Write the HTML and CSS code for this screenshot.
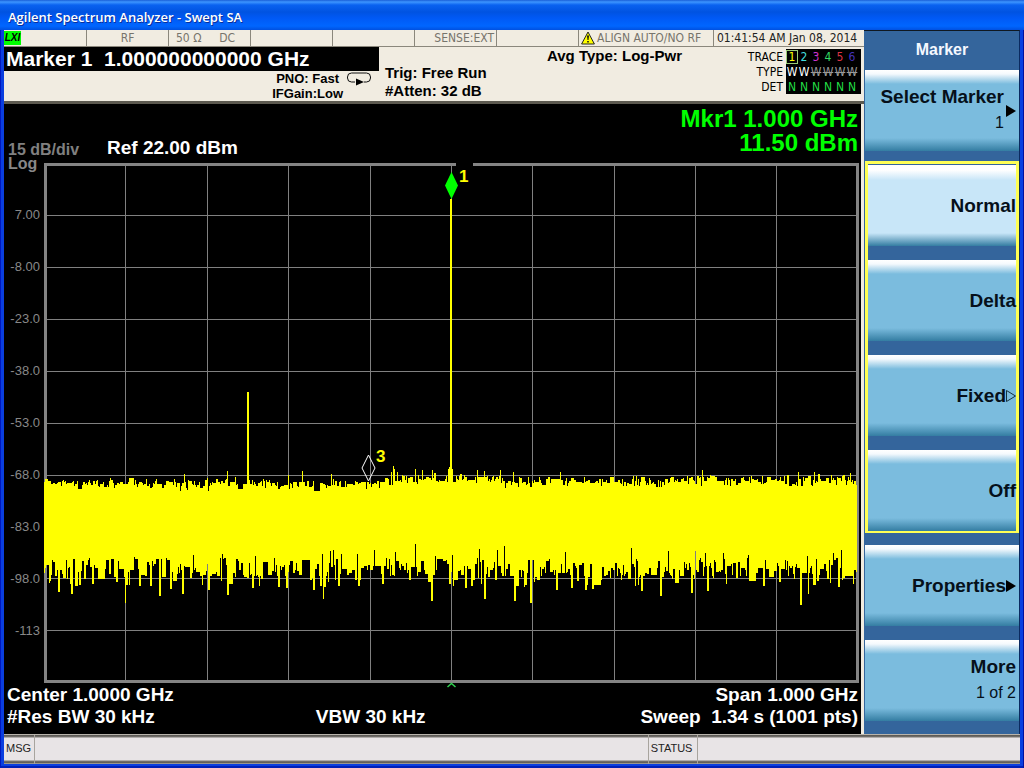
FILE: index.html
```
<!DOCTYPE html>
<html lang="en">
<head>
<meta charset="utf-8">
<title>Agilent Spectrum Analyzer - Swept SA</title>
<link rel="stylesheet" href="styles.css">
</head>
<body>
<div class="window">
  <header class="titlebar"><h1>Agilent Spectrum Analyzer - Swept SA</h1></header>
  <div class="workspace">
    <main class="screen">
      <div class="status-row">
        <div class="cell"><span class="lxi">LXI</span></div>
        <div class="cell center">RF</div>
        <div class="cell input"><span>50 Ω</span><span>DC</span></div>
        <div class="cell"></div>
        <div class="cell"></div>
        <div class="cell end">SENSE:EXT</div>
        <div class="cell"></div>
        <div class="cell align">
          <svg class="warn" viewBox="0 0 14 14" aria-hidden="true"><path d="M7 1 13.4 13H.6Z" fill="#ff0" stroke="#222" stroke-linejoin="round"/><path d="M6 4.500h2L7.500 9h-1ZM6.200 10h1.600v1.600H6.200Z" fill="#111"/></svg>
          <span>ALIGN AUTO/NO RF</span>
        </div>
        <div class="cell clock">01:41:54 AM Jan 08, 2014</div>
      </div>
      <div class="info">
        <div class="info-marker">
          <div class="marker-value">Marker 1&nbsp; 1.000000000000 GHz</div>
          <div class="pno">
            <div class="pno-text">PNO: Fast<br>IFGain:Low</div>
            <svg class="loop" viewBox="0 0 24 14" aria-hidden="true"><path d="M8 10H4.500Q.5 10 .5 6V5Q.5 1 4.500 1h15q4 0 4 4v1q0 4-4 4H17" fill="none" stroke="#111"/><path d="M9 6.500 17 10l-8 3.500Z" fill="#000"/></svg>
          </div>
        </div>
        <div class="trig">Trig: Free Run<br>#Atten: 32 dB</div>
        <div class="avg">Avg Type: Log-Pwr</div>
        <table class="traces">
          <tr><th scope="row">TRACE</th><td class="t1"><span>1</span></td><td class="t2">2</td><td class="t3">3</td><td class="t4">4</td><td class="t5">5</td><td class="t6">6</td></tr>
          <tr class="type"><th scope="row">TYPE</th><td>W</td><td>W</td><td class="off">W</td><td class="off">W</td><td class="off">W</td><td class="off">W</td></tr>
          <tr class="det"><th scope="row">DET</th><td>N</td><td>N</td><td>N</td><td>N</td><td>N</td><td>N</td></tr>
        </table>
      </div>
      <section class="display">
        <div class="readout">
          <div class="scale">15 dB/div</div>
          <div class="ref">Ref 22.00 dBm</div>
          <div class="mkr"><div>Mkr1 1.000 GHz</div><div>11.50 dBm</div></div>
        </div>
        <div class="graph">
          <div class="axis">
            <span class="log">Log</span>
            <span>7.00</span><span>-8.00</span><span>-23.0</span><span>-38.0</span><span>-53.0</span><span>-68.0</span><span>-83.0</span><span>-98.0</span><span>-113</span>
          </div>
          <svg class="plot" viewBox="0 0 815 520" preserveAspectRatio="none" role="img" aria-label="Spectrum trace">
            <path class="grid" d="M81.500 0V520M163.500 0V520M244.500 0V520M326.500 0V520M407.500 0V520M488.500 0V520M570.500 0V520M651.500 0V520M732.500 0V520M0 52.500H815M0 104.500H815M0 156.500H815M0 208.500H815M0 260.500H815M0 312.500H815M0 363.500H815M0 415.500H815M0 467.500H815"/>
            <rect class="frame" x="1.500" y="1.500" width="812" height="517"/>
            <rect x="412" y="0" width="17" height="3"/>
            <path id="trace" class="trace" d=""/>
            <path d="M407.500 9 414 22.500 407.500 36 401 22.500Z" fill="#0f0"/>
            <text class="tag" x="415" y="19">1</text>
            <path d="M324.500 292 331 305 324.500 318 318 305Z" fill="none" stroke="#fff"/>
            <text class="tag" x="332" y="299">3</text>
            <path d="M403.500 524 407.500 520.500 411.500 524" fill="none" stroke="#2fd04f" stroke-width="1.500"/>
          </svg>
        </div>
        <div class="sweep">
          <span>Center 1.0000 GHz</span><span></span><span class="right">Span 1.000 GHz</span>
          <span>#Res BW 30 kHz</span><span>VBW 30 kHz</span><span class="right">Sweep&nbsp; 1.34 s (1001 pts)</span>
        </div>
      </section>
    </main>
    <nav class="softkeys">
      <h2>Marker</h2>
      <button class="key arrowed" type="button">
        <span class="label">Select Marker<small>1</small></span>
        <svg class="arrow" viewBox="0 0 10 12"><path d="M0 0 10 6 0 12Z"/></svg>
      </button>
      <div class="group">
        <button class="key active" type="button">Normal</button>
        <button class="key" type="button">Delta</button>
        <button class="key" type="button">Fixed<svg class="arrow" viewBox="0 0 10 12"><path class="hollow" d="M.5 .5 9.500 6 .5 11.500Z"/></svg></button>
        <button class="key" type="button">Off</button>
      </div>
      <button class="key" type="button">Properties<svg class="arrow" viewBox="0 0 10 12"><path d="M0 0 10 6 0 12Z"/></svg></button>
      <button class="key" type="button"><span class="label">More<small>1 of 2</small></span></button>
    </nav>
  </div>
  <footer class="statusbar"><span class="msg">MSG</span><span class="fill"></span><span class="stat">STATUS</span><span class="rest"></span></footer>
</div>
<script src="trace.js"></script>
</body>
</html>
```
FILE: styles.css
```
* { box-sizing: border-box; }
body { margin: 0; font-family: "Liberation Sans", Arial, sans-serif; color: #000; }
.window {
  min-height: 100vh; display: flex; flex-direction: column;
  padding: 0 4px 4px; background: #0a3ee0;
  box-shadow: inset 1px 0 #0018c0, inset -1px 0 #0010a0, inset 0 -2px #0020b8;
}
.titlebar {
  height: 30px; margin: 0 -4px; padding: 0 8px; display: flex; align-items: center;
  background: linear-gradient(#1a5fd8 0, #3d95ff 2px, #0a62f0 5px, #0053e1 12px, #0059f5 18px, #0066ff 26px, #0050e0 30px);
}
h1 {
  margin: 4px 0 0; font: 600 13px/18px "Open Sans", "Noto Sans", sans-serif;
  color: #fff; text-shadow: 1px 1px #0a2f9a;
}
.workspace { flex: 1; display: flex; background: #f0ebe0; }
.screen { flex: 1; min-width: 0; display: flex; flex-direction: column; margin-right: 3px; }

.status-row {
  display: grid; grid-template-columns: 83fr repeat(6, 82fr) 135fr 150fr; height: 17px;
  margin-right: -3px; background: #f1ece1; border-bottom: 1px solid #8b877c;
  font: 12px/16px "DejaVu Sans Condensed", "DejaVu Sans", sans-serif; color: #77746c;
}
.cell { border-right: 1px solid #8b877c; display: flex; white-space: nowrap; min-width: 0; }
.cell.center { justify-content: center; }
.cell.end { justify-content: flex-end; padding-right: 2px; }
.cell.input { padding: 0 15px 0 7px; justify-content: space-between; }
.cell.clock { color: #222; padding-left: 3px; border-right: 0; }
.lxi { align-self: center; width: 17px; font: italic bold 10px/14px "Liberation Sans", sans-serif; background: #0f0; color: #000; text-align: center; }
.warn { width: 14px; height: 14px; margin: 1px 2px 0; }

.info {
  display: flex; height: 57px; background: #f1ece1;
  border-image: linear-gradient(#cbc5b8, #5c594f) 1; border-width: 0 0 3px; border-style: solid;
  font-size: 15px; font-weight: bold; line-height: 18px; margin-right: -3px; white-space: nowrap;
}
.info-marker { width: 375px; }
.marker-value { background: #000; color: #fff; font-size: 21px; line-height: 24px; padding-left: 2px; }
.pno { display: flex; justify-content: flex-end; gap: 4px; padding-right: 8px; font-size: 13px; line-height: 15px; text-align: center; }
.loop { width: 24px; height: 14px; margin-top: 1px; }
.trig { width: 162px; padding: 17px 0 0 6px; }
.avg { flex: 1; padding-left: 6px; }
.traces { border-collapse: collapse; margin: 2px 3px 0 0; font: 12px/14px "DejaVu Sans Condensed", "DejaVu Sans", sans-serif; height: 45px; }
.traces th { font-weight: normal; text-align: right; padding: 0 3px 0 0; }
.traces td { width: 12px; min-width: 12px; max-width: 12px; padding: 0; text-align: center; background: #000; color: #fff; }
.traces td:last-child { width: 15px; min-width: 15px; max-width: 15px; padding-right: 3px; }
.traces td.t1 { color: #ff0; }
.t1 span { display: block; outline: 1px solid #9c7; outline-offset: -1px; }
.traces td.t2 { color: #4dd; }
.traces td.t3 { color: #c3c; }
.traces td.t4 { color: #3d6; }
.traces td.t5 { color: #d34; }
.traces td.t6 { color: #43b; }
.traces td.off { color: #999; text-decoration: line-through; }
.traces .det td { color: #2d4; }

.display {
  flex: 1; display: grid; grid-template-rows: 59px 1fr 51px; background: #000; color: #fff;
  font-size: 19px; font-weight: bold; line-height: 22px; white-space: nowrap;
}
.readout { display: flex; align-items: flex-end; padding: 0 3px 4px 4px; }
.scale { width: 99px; font-size: 16px; line-height: 18px; color: #808080; }
.mkr { margin-left: auto; align-self: flex-start; padding-top: 3px; font-size: 24px; line-height: 24px; text-align: right; color: #0f0; }
.graph { display: flex; padding-right: 2px; min-height: 0; }
.axis {
  width: 40px; display: grid; grid-template-rows: 1fr repeat(9, 2fr) 1fr; align-items: center;
  justify-items: end; padding-right: 4px; font-size: 13px; font-weight: normal; line-height: 14px; color: #888;
}
.log { align-self: start; justify-self: start; padding-left: 4px; margin-top: -6px; font-size: 16px; line-height: 14px; font-weight: bold; }
.plot { flex: 1; min-width: 0; width: 100%; height: 100%; overflow: visible; }
.grid { fill: none; stroke: #808080; }
.frame { fill: none; stroke: #848484; stroke-width: 3; }
.trace { fill: #ff0; shape-rendering: crispEdges; }
.tag { fill: #ff0; font-size: 17px; font-weight: bold; }
.sweep { display: grid; grid-template-columns: 311fr 160fr 386fr; grid-template-rows: 22px 22px; padding: 1px 3px 0; }
.right { text-align: right; }

.softkeys {
  width: 156px; display: flex; flex-direction: column; padding: 0 0 0 1px;
  background: #34659c; border-right: 1px solid #0a2a60; border-top: 1px solid #101820;
}
h2 { margin: 0; font-size: 16px; line-height: 37px; height: 39px; text-align: center; color: #f4f8ff; }
.key {
  display: flex; align-items: center; justify-content: flex-end; min-height: 81px; width: 100%;
  border: 0; border-radius: 0; padding: 0 3px; text-align: right; white-space: nowrap;
  font: bold 19px/24px "Liberation Sans", Arial, sans-serif; color: #06101a;
  background: linear-gradient(#fff 0, #f4f9fd 4px, #7bbcde 14px, #7bbcde 68px, #347da2 81px);
}
.key.active { background: linear-gradient(#fff 0, #fff 5px, #c8e6f8 15px, #c8e6f8 68px, #347da2 81px); }
.key.arrowed { gap: 2px; }
.key small { display: block; font-size: 16px; font-weight: normal; line-height: 28px; }
.key .arrow { width: 10px; height: 12px; flex: none; }
.hollow { fill: none; stroke: #16303e; }
.group {
  display: flex; flex-direction: column; gap: 14px; margin: 10px 0 12px; padding-top: 1px;
  border: solid #ffff54; border-width: 3px 3px 2px;
}
.group .key { padding: 0; }
.softkeys > .key + .key { margin-top: 14px; }

.statusbar {
  display: flex; height: 30px; border-top: 1px solid #b8b4ac;
  background: linear-gradient(#55534f 0, #77746f 2px, #e8e4e6 3px, #e8e4e6 25px, #77746f 26px, #5a5852 28px, #d8d4cc 29px);
  font-size: 11px; line-height: 27px; color: #222;
}
.statusbar span { border-right: 1px solid #a8a49e; }
.msg { width: 31px; padding-left: 2px; }
.fill { flex: 614; }
.stat { width: 49px; padding-left: 2px; }
.statusbar .rest { flex: 323; border-right: 0; }
```
FILE: trace.js
```
// Draws the noise band of the swept trace: one vertical bar per column.
(function () {
  var seed = 20140;
  function rnd() {
    seed = (seed * 1103515245 + 12345) % 2147483648;
    return seed / 2147483648;
  }

  // [column, level] pairs, in plot coordinates.
  var peaks = [[140,311],[183,308],[203,229],[204,229],[244,312],[258,308],[287,311],[347,309],[349,303],[350,306],[353,309],[371,306],
    [378,307],[388,307],[404,306],[405,304],[408,306],[433,307],[440,308],[456,307],[469,309],[516,309],[658,307],[754,309],[770,309],[806,310]];
  var dips = [[14,429],[27,431],[35,422],[48,421],[81,440],[82,422],[106,423],[115,433],[126,426],[138,431],[164,427],[183,432],
    [208,425],[234,424],[242,425],[269,427],[278,436],[294,423],[314,423],[338,421],[365,417],[387,438],[405,421],[421,425],[440,436],
    [451,417],[470,438],[486,440],[512,427],[527,425],[541,427],[548,426],[597,428],[616,433],[647,430],[663,428],[719,423],
    [756,442],[763,431],[794,424]];
  var gaps = [[22,397],[44,397],[90,394],[93,396],[123,397],[149,392],[178,391],[192,396],[211,393],[278,391],[286,388],[289,387],
    [297,391],[313,391],[330,387],[351,389],[371,381],[391,393],[408,392],[435,386],[453,387],[460,383],[521,389],[587,385],
    [624,388],[651,388],[661,390],[679,390],[704,392],[763,393],[789,390],[797,387]];

  function lookup(list, widen) {
    var map = {};
    list.forEach(function (p) {
      map[p[0]] = p[1];
      if (widen && !(p[0] + 1 in map)) map[p[0] + 1] = p[1];
    });
    return map;
  }
  var peakAt = lookup(peaks), dipAt = lookup(dips, true), gapAt = lookup(gaps);

  var d = "", top = 320, bottom = 410;
  for (var x = 0; x < 813; x++) {
    var base = x < 340 ? 321 : (x < 460 ? 316 : (x < 620 ? 319 : 317));
    if (rnd() < 0.65) top = base + Math.round((rnd() + rnd() - 1) * 7);
    if (rnd() < 0.55) {
      var r = rnd();
      bottom = 401 + Math.round(rnd() * 13);
      if (r < 0.3) bottom += Math.round(rnd() * 13);
      if (r > 0.82) bottom = 395 + Math.round(rnd() * 6);
    }
    var t = x in peakAt ? peakAt[x] : top;
    var b = x in gapAt ? gapAt[x] : (x in dipAt ? dipAt[x] : bottom);
    if (x === 406 || x === 407) t = 36;
    d += "M" + x + " " + t + "h1V" + b + "h-1Z";
  }
  document.getElementById("trace").setAttribute("d", d);
})();
```
